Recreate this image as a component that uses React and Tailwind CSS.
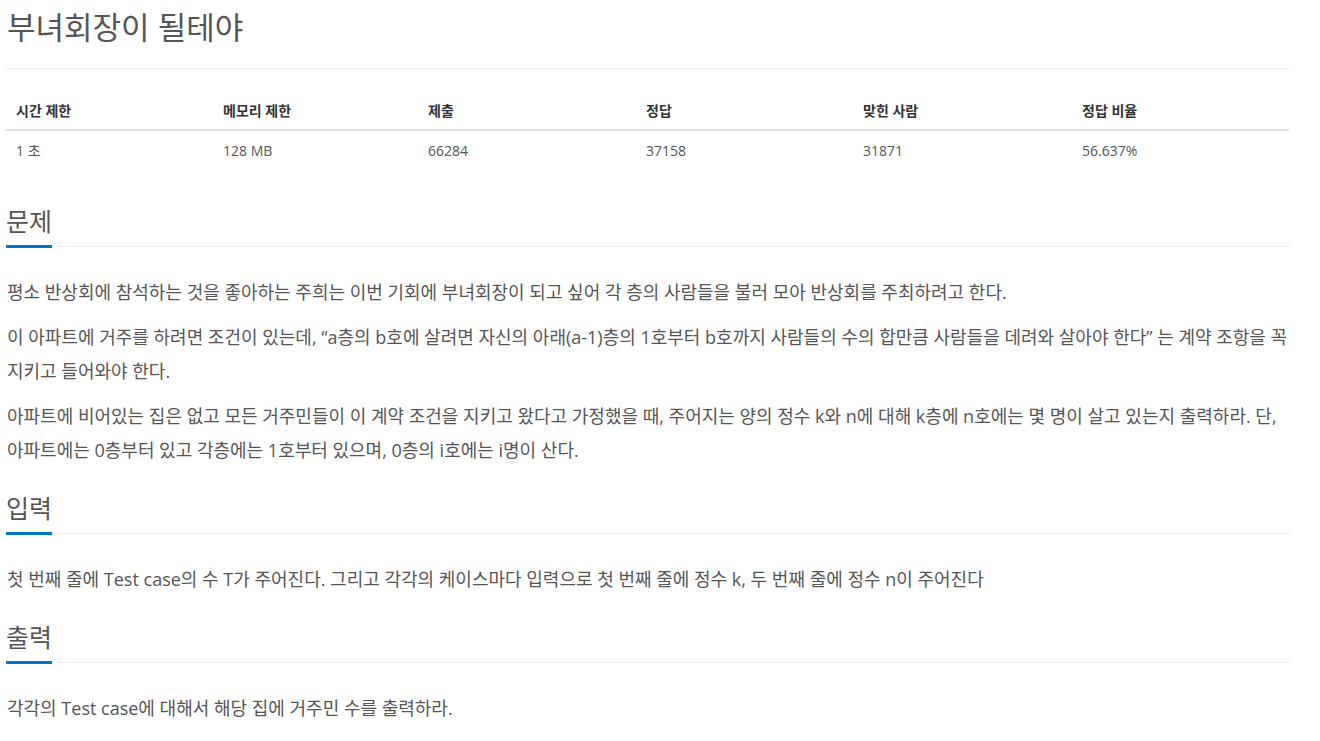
import React from 'react';

const stats = [
  { label: '시간 제한', value: '1 초', w: 'w-[207px]' },
  { label: '메모리 제한', value: '128 MB', w: 'w-[205px]' },
  { label: '제출', value: '66284', w: 'w-[218px]' },
  { label: '정답', value: '37158', w: 'w-[217px]' },
  { label: '맞힌 사람', value: '31871', w: 'w-[219px]' },
  { label: '정답 비율', value: '56.637%', w: 'w-[217px]' },
];

const Headline = ({ children }) => (
  <h2 className="mt-[28px] border-b border-dotted border-[#ddd] text-[25px] leading-[26px] font-normal text-[#555]">
    <span className="inline-block pb-[11px] mb-[-2px] border-b-[3px] border-[#0076c0]">{children}</span>
  </h2>
);

const Para = ({ children }) => (
  <p className="mb-[11px] text-[18px] leading-[34px] text-[#555]">{children}</p>
);

export default function App() {
  return (
    <div
      className="w-[1320px] min-h-[741px] bg-white px-[6px] pt-[11px]"
      style={{ fontFamily: '"Open Sans", "Noto Sans CJK KR", sans-serif' }}
    >
      <div className="w-[1283px]">
        <h1 className="text-[31px] leading-[33px] font-normal text-[#555] pl-[1px]">부녀회장이 될테야</h1>
        <div className="mt-[24px] border-t border-[#eee]" />

        <table className="mt-[24px] w-full border-collapse text-[14px]">
          <thead>
            <tr className="border-b-2 border-[#ddd]">
              {stats.map((s) => (
                <th key={s.label} className={`${s.w} text-left font-bold text-[#333] px-[10px] py-[8px] leading-[20px]`}>
                  {s.label}
                </th>
              ))}
            </tr>
          </thead>
          <tbody>
            <tr>
              {stats.map((s) => (
                <td key={s.label} className="text-left text-[#555] px-[10px] py-[10px] leading-[20px]">
                  {s.value}
                </td>
              ))}
            </tr>
          </tbody>
        </table>

        <div className="mt-[37px]">
          <Headline>문제</Headline>
          <div className="mt-[28px] pl-[1px]">
            <Para>평소 반상회에 참석하는 것을 좋아하는 주희는 이번 기회에 부녀회장이 되고 싶어 각 층의 사람들을 불러 모아 반상회를 주최하려고 한다.</Para>
            <Para>이 아파트에 거주를 하려면 조건이 있는데, “a층의 b호에 살려면 자신의 아래(a-1)층의 1호부터 b호까지 사람들의 수의 합만큼 사람들을 데려와 살아야 한다” 는 계약 조항을 꼭 지키고 들어와야 한다.</Para>
            <Para>아파트에 비어있는 집은 없고 모든 거주민들이 이 계약 조건을 지키고 왔다고 가정했을 때, 주어지는 양의 정수 k와 n에 대해 k층에 n호에는 몇 명이 살고 있는지 출력하라. 단, 아파트에는 0층부터 있고 각층에는 1호부터 있으며, 0층의 i호에는 i명이 산다.</Para>
          </div>
        </div>

        <Headline>입력</Headline>
        <div className="mt-[28px] pl-[1px]">
          <Para>첫 번째 줄에 Test case의 수 T가 주어진다. 그리고 각각의 케이스마다 입력으로 첫 번째 줄에 정수 k, 두 번째 줄에 정수 n이 주어진다</Para>
        </div>

        <Headline>출력</Headline>
        <div className="mt-[28px] pl-[1px]">
          <Para>각각의 Test case에 대해서 해당 집에 거주민 수를 출력하라.</Para>
        </div>
      </div>
    </div>
  );
}
